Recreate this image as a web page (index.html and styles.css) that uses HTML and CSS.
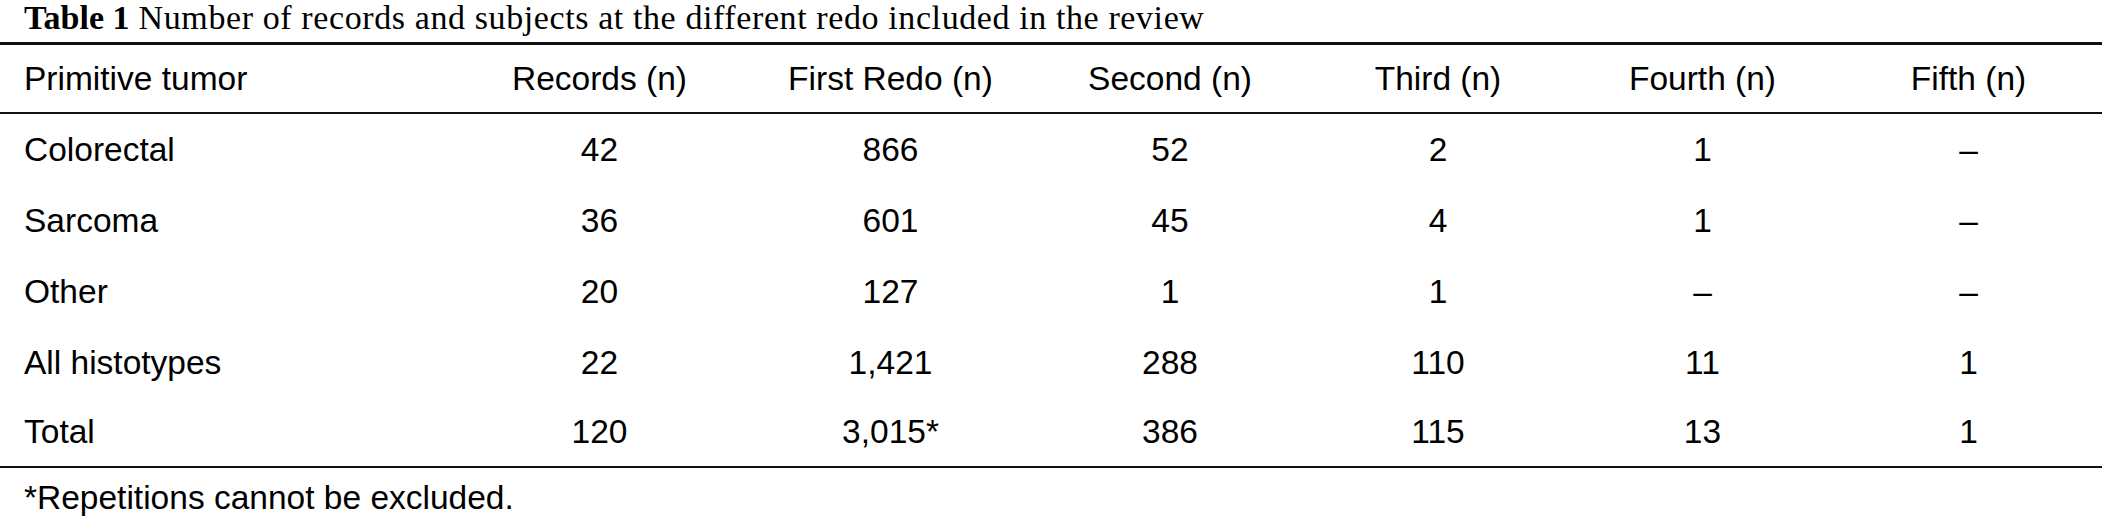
FILE: index.html
```html
<!DOCTYPE html>
<html>
<head>
<meta charset="utf-8">
<link rel="stylesheet" href="styles.css">
</head>
<body>
<div class="page">
  <div class="caption"><span class="label">Table 1</span> Number of records and subjects at the different redo included in the review</div>
  <table class="data">
    <colgroup>
      <col class="c0"><col class="c1"><col class="c2"><col class="c3"><col class="c4"><col class="c5"><col class="c6">
    </colgroup>
    <thead>
      <tr><th class="first">Primitive tumor</th><th>Records (n)</th><th>First Redo (n)</th><th>Second (n)</th><th>Third (n)</th><th>Fourth (n)</th><th>Fifth (n)</th></tr>
    </thead>
    <tbody>
      <tr><td class="first">Colorectal</td><td>42</td><td>866</td><td>52</td><td>2</td><td>1</td><td>–</td></tr>
      <tr><td class="first">Sarcoma</td><td>36</td><td>601</td><td>45</td><td>4</td><td>1</td><td>–</td></tr>
      <tr><td class="first">Other</td><td>20</td><td>127</td><td>1</td><td>1</td><td>–</td><td>–</td></tr>
      <tr><td class="first">All histotypes</td><td>22</td><td>1,421</td><td>288</td><td>110</td><td>11</td><td>1</td></tr>
      <tr><td class="first">Total</td><td>120</td><td>3,015*</td><td>386</td><td>115</td><td>13</td><td>1</td></tr>
    </tbody>
  </table>
  <div class="note">*Repetitions cannot be excluded.</div>
</div>
</body>
</html>
```

FILE: styles.css
```css
html, body {
  margin: 0;
  padding: 0;
  background: #fff;
}
.page {
  width: 2102px;
  color: #000;
}
.caption {
  font-family: "Liberation Serif", "Times New Roman", serif;
  font-size: 34px;
  letter-spacing: 0.6px;
  line-height: 36px;
  height: 42px;
  padding-left: 24px;
  white-space: nowrap;
  box-sizing: border-box;
}
.caption .label {
  font-weight: bold;
  letter-spacing: 0;
}
.data {
  width: 2102px;
  table-layout: fixed;
  border-collapse: separate;
  border-spacing: 0;
  border-top: 3px solid #111;
  font-family: "Liberation Sans", Arial, sans-serif;
  font-size: 33.5px;
}
.c0 { width: 452px; }
.c1 { width: 295px; }
.c2 { width: 287px; }
.c3 { width: 272px; }
.c4 { width: 264px; }
.c5 { width: 265px; }
.c6 { width: 267px; }
.data th, .data td {
  box-sizing: border-box;
  height: 71px;
  padding: 0;
  text-align: center;
  font-weight: normal;
  vertical-align: middle;
  white-space: nowrap;
}
.data thead th {
  height: 69px;
  border-bottom: 2px solid #111;
}
.data tbody tr:last-child td {
  height: 70px;
  border-bottom: 2px solid #111;
}
.data .first {
  text-align: left;
  padding-left: 24px;
}
.note {
  font-family: "Liberation Sans", Arial, sans-serif;
  font-size: 33.5px;
  line-height: 50px;
  padding-top: 5px;
  padding-left: 24px;
}
```
